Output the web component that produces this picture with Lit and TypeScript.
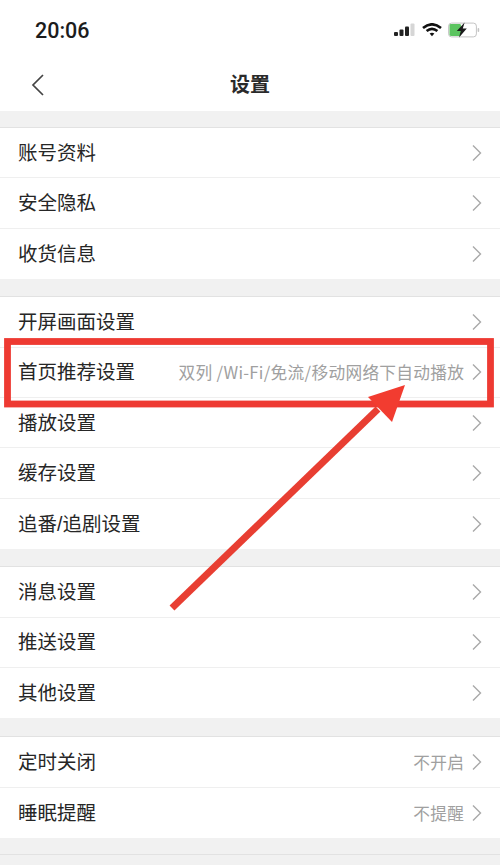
import { LitElement, html, css, svg } from "lit";
import { customElement } from "lit/decorators.js";

type Row = { label: string; value?: string };

const SECTIONS: Row[][] = [
  [{ label: "账号资料" }, { label: "安全隐私" }, { label: "收货信息" }],
  [
    { label: "开屏画面设置" },
    { label: "首页推荐设置", value: "双列 /Wi-Fi/免流/移动网络下自动播放" },
    { label: "播放设置" },
    { label: "缓存设置" },
    { label: "追番/追剧设置" },
  ],
  [{ label: "消息设置" }, { label: "推送设置" }, { label: "其他设置" }],
  [
    { label: "定时关闭", value: "不开启" },
    { label: "睡眠提醒", value: "不提醒" },
  ],
];

@customElement("app-root")
export class AppRoot extends LitElement {
  static styles = css`
    :host {
      display: block;
      position: relative;
      width: 500px;
      height: 865px;
      overflow: hidden;
      background: #f1f1f1;
      font-family: "Liberation Sans", "Noto Sans CJK SC", sans-serif;
      color: #222;
    }
    .top {
      background: #fff;
      height: 111px;
      display: flex;
      flex-direction: column;
    }
    .status {
      height: 60px;
      display: flex;
      align-items: center;
      justify-content: space-between;
      padding: 0 20px 0 35px;
      box-sizing: border-box;
    }
    .time {
      font-size: 21.5px;
      font-weight: 500;
      font-family: "Roboto", "Liberation Sans", sans-serif;
      color: #1c1c1c;
    }
    .icons {
      display: flex;
      align-items: center;
      gap: 6px;
    }
    .nav {
      height: 51px;
      display: flex;
      align-items: center;
      justify-content: center;
      position: relative;
      padding-bottom: 4px;
      box-sizing: border-box;
    }
    .back {
      position: absolute;
      left: 31px;
      top: 13px;
    }
    .title {
      font-size: 20px;
      font-weight: 700;
      color: #2a2a2a;
    }
    .section {
      background: #fff;
      margin-top: 17px;
      border-top: 1px solid #e2e2e2;
    }
    .section.first,
    .section.last {
      margin-top: 16px;
    }
    .section.fourth {
      margin-top: 18px;
    }
    .row {
      height: 50.4px;
      box-sizing: border-box;
      display: flex;
      align-items: center;
      padding: 0 18px 3px;
      border-bottom: 1px solid #efefef;
    }
    .row:last-child {
      border-bottom: none;
    }
    .label {
      font-size: 19.5px;
      color: #262626;
      flex: 1;
      white-space: nowrap;
    }
    .value {
      font-family: "Noto Sans CJK SC", sans-serif;
      font-size: 16.7px;
      letter-spacing: 0.3px;
      color: #a0a0a0;
      margin: 3px 7.7px 0 0;
      white-space: nowrap;
    }
    .chev {
      display: block;
      flex: none;
      margin-top: 3px;
    }
    .overlay {
      position: absolute;
      left: 0;
      top: 0;
      pointer-events: none;
    }
  `;

  private chevron() {
    return html`<svg class="chev" width="10" height="18" viewBox="0 0 10 18">
      <path d="M1 1.5 L8.5 9 L1 16.5" fill="none" stroke="#a9a9a9" stroke-width="1.4" />
    </svg>`;
  }

  private statusIcons() {
    return html`<div class="icons">
      <svg width="22" height="14" viewBox="0 0 22 14">
        <rect x="0" y="9" width="4" height="4" rx="1" fill="#222" />
        <rect x="5.5" y="6.5" width="4" height="6.5" rx="1" fill="#222" />
        <rect x="11" y="3.5" width="4" height="9.5" rx="1" fill="#222" />
        <rect x="16.5" y="0.5" width="4" height="12.5" rx="1" fill="#d6d6d6" />
      </svg>
      <svg width="20" height="14" viewBox="0 0 20 14">
        <path d="M1 5 Q10 -2.4 19 5" fill="none" stroke="#111" stroke-width="2.6" />
        <path d="M4.6 8 Q10 3.6 15.4 8" fill="none" stroke="#111" stroke-width="2.6" />
        <path d="M7.6 10.6 Q10 8.8 12.4 10.6 L10 13.2 Z" fill="#111" />
      </svg>
      <svg width="32" height="16" viewBox="0 0 32 16">
        <rect x="0.6" y="1.1" width="27.8" height="13.8" rx="3" fill="#fff" stroke="#c4c4c4" />
        <rect x="1.5" y="2" width="11.5" height="12" rx="1.4" fill="#5bc45f" />
        <rect x="29.6" y="6" width="1.6" height="4" rx="0.8" fill="#c4c4c4" />
        <path d="M16.6 0.5 L8.8 9 H12.8 L11 15.5 L18.8 6.6 H14.8 Z" fill="#1c1c1c" />
      </svg>
    </div>`;
  }

  private overlay() {
    return svg`
      <rect x="7.5" y="341.5" width="483" height="62.5" fill="none" stroke="#ee3a32" stroke-width="6.8" />
      <path d="M172 608 L378 409" fill="none" stroke="#e83e32" stroke-width="7" />
      <path d="M405 385 L368 397 L392 422 Z" fill="#f23c30" />
    `;
  }

  render() {
    const classes = ["first", "", "", "fourth"];
    return html`
      <div class="top">
        <div class="status">
          <span class="time">20:06</span>
          ${this.statusIcons()}
        </div>
        <div class="nav">
          <svg class="back" width="14" height="24" viewBox="0 0 14 24">
            <path d="M12 2 L2 12 L12 22" fill="none" stroke="#444" stroke-width="1.7" />
          </svg>
          <span class="title">设置</span>
        </div>
      </div>
      ${SECTIONS.map(
        (rows, i) => html`<div class="section ${classes[i]}">
          ${rows.map(
            (r) => html`<div class="row">
              <span class="label">${r.label}</span>
              ${r.value ? html`<span class="value">${r.value}</span>` : ""}
              ${this.chevron()}
            </div>`
          )}
        </div>`
      )}
      <div class="section last"></div>
      <svg class="overlay" width="500" height="865" viewBox="0 0 500 865">${this.overlay()}</svg>
    `;
  }
}
